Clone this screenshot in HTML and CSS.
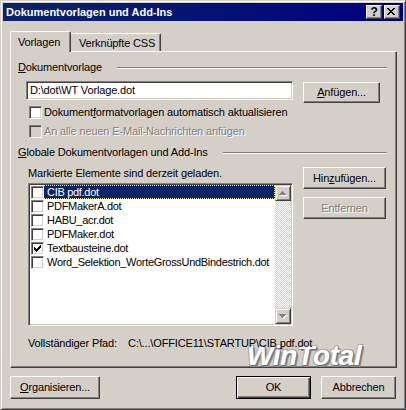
FILE: index.html
```html
<!DOCTYPE html>
<html lang="de">
<head>
<meta charset="utf-8">
<title>Dokumentvorlagen und Add-Ins</title>
<link rel="stylesheet" href="styles.css">
</head>
<body>
<div class="window">
  <div class="titlebar">
    <span class="title">Dokumentvorlagen und Add-Ins</span>
    <div class="tb-buttons">
      <span class="tb-btn help">?</span>
      <span class="tb-btn close">
        <svg width="14" height="12" viewBox="2 1 14 12" shape-rendering="crispEdges"><path fill="#000" d="M4 3h2v1h-2z M10 3h2v1h-2z M5 4h2v1h-2z M9 4h2v1h-2z M6 5h4v1h-4z M7 6h2v1h-2z M6 7h4v1h-4z M5 8h2v1h-2z M9 8h2v1h-2z M4 9h2v1h-2z M10 9h2v1h-2z"/></svg>
      </span>
    </div>
  </div>
  <div class="client">
    <div class="tabs">
      <div class="tab active">Vorlagen</div>
      <div class="tab inactive">Verknüpfte CSS</div>
    </div>
    <div class="panel">
      <div class="group-head g1"><span class="gh-label"><u>D</u>okumentvorlage</span><i class="etch"></i></div>
      <div class="tpl-row">
        <div class="textfield">D:\dot\WT Vorlage.dot</div>
        <div class="btn btn-attach"><span><u>A</u>nfügen...</span></div>
      </div>
      <div class="check-row first"><span class="cb"></span><span>Dokument<u>f</u>ormatvorlagen automatisch aktualisieren</span></div>
      <div class="check-row second disabled"><span class="cb"></span><span>An alle neuen E-Mail-Nachrichten anfügen</span></div>
      <div class="group-head g2"><span class="gh-label"><u>G</u>lobale Dokumentvorlagen und Add-Ins</span><i class="etch"></i></div>
      <div class="addins">
        <div class="addins-left">
          <div class="hint">Markierte Elemente sind derzeit geladen.</div>
          <div class="listbox">
            <div class="items">
              <div class="item selected"><span class="cb"></span><span class="name">CIB pdf.dot</span></div>
              <div class="item"><span class="cb"></span><span class="name">PDFMakerA.dot</span></div>
              <div class="item"><span class="cb"></span><span class="name">HABU_acr.dot</span></div>
              <div class="item"><span class="cb"></span><span class="name">PDFMaker.dot</span></div>
              <div class="item"><span class="cb checked"><svg width="13" height="13" viewBox="0 0 13 13" shape-rendering="crispEdges"><path fill="#000" d="M9 3h1v1h-1z M8 4h2v1h-2z M3 5h1v1h-1z M7 5h3v1h-3z M3 6h2v1h-2z M6 6h3v1h-3z M3 7h5v1h-5z M4 8h3v1h-3z M5 9h1v1h-1z"/></svg></span><span class="name">Textbausteine.dot</span></div>
              <div class="item"><span class="cb"></span><span class="name">Word_Selektion_WorteGrossUndBindestrich.dot</span></div>
            </div>
            <div class="scrollbar">
              <div class="sb-btn"><svg width="16" height="16" viewBox="0 0 16 16" shape-rendering="crispEdges"><path fill="#fff" d="M8 7h1v1h-1z M7 8h3v1h-3z M6 9h5v1h-5z M5 10h7v1h-7z"/><path fill="#808080" d="M7 6h1v1h-1z M6 7h3v1h-3z M5 8h5v1h-5z M4 9h7v1h-7z"/></svg></div>
              <div class="sb-track"></div>
              <div class="sb-btn"><svg width="16" height="16" viewBox="0 0 16 16" shape-rendering="crispEdges"><path fill="#fff" d="M5 7h7v1h-7z M6 8h5v1h-5z M7 9h3v1h-3z M8 10h1v1h-1z"/><path fill="#808080" d="M4 6h7v1h-7z M5 7h5v1h-5z M6 8h3v1h-3z M7 9h1v1h-1z"/></svg></div>
            </div>
          </div>
        </div>
        <div class="addins-right">
          <div class="btn btn-side"><span>Hin<u>z</u>ufügen...</span></div>
          <div class="btn btn-side disabled second"><span>Entfernen</span></div>
        </div>
      </div>
      <div class="path-row"><span>Vollständiger Pfad:</span><span class="path">C:\...\OFFICE11\STARTUP\CIB pdf.dot</span></div>
      <div class="watermark">WinTotal</div>
    </div>
    <div class="footer">
      <div class="btn btn-org"><span><u>O</u>rganisieren...</span></div>
      <span class="spacer"></span>
      <div class="btn btn-foot default"><span>OK</span></div>
      <div class="btn btn-foot cancel"><span>Abbrechen</span></div>
    </div>
  </div>
</div>
</body>
</html>
```

FILE: styles.css
```css
* { box-sizing: border-box; }
html, body { margin: 0; padding: 0; }
body {
  width: 406px;
  height: 410px;
  overflow: hidden;
  background: #d4d0c8;
  font: 11px/13px "Liberation Sans", Arial, sans-serif;
  letter-spacing: -0.15px;
  color: #000;
}
u { text-decoration: underline; text-underline-offset: 1px; }

.window {
  width: 406px;
  height: 410px;
  background: #d4d0c8;
  border: 1px solid;
  border-color: #d4d0c8 #404040 #404040 #d4d0c8;
  box-shadow: inset 1px 1px #fff, inset -1px -1px #808080;
  padding: 2px;
  display: flex;
  flex-direction: column;
}

/* title bar */
.titlebar {
  height: 18px;
  flex: none;
  background: linear-gradient(to right, #0a246a, #000080);
  color: #fff;
  display: flex;
  align-items: center;
  padding: 0 3px 0 3px;
}
.title { font-weight: bold; flex: 1; letter-spacing: 0; }
.tb-buttons { display: flex; gap: 2px; }
.tb-btn {
  width: 16px;
  height: 14px;
  background: #d4d0c8;
  border: 1px solid;
  border-color: #fff #404040 #404040 #fff;
  box-shadow: inset -1px -1px #808080;
  display: flex;
  align-items: center;
  justify-content: center;
  color: #000;
}
.tb-btn.help { font-weight: bold; font-size: 12px; line-height: 12px; }
.tb-btn svg { display: block; }

/* client */
.client { flex: 1; display: flex; flex-direction: column; }
.tabs {
  margin: 10px 0 0 7px;
  height: 20px;
  display: flex;
  align-items: flex-end;
}
.tab {
  background: #d4d0c8;
  border-top: 1px solid #fff;
  border-right: 1px solid #404040;
  box-shadow: inset -1px 0 #808080;
  border-top-left-radius: 2px;
  border-top-right-radius: 2px;
}
.tab.active {
  position: relative;
  z-index: 2;
  width: 61px;
  height: 21px;
  margin-bottom: -1px;
  border-left: 1px solid #fff;
  padding: 4px 0 0 7px;
}
.tab.inactive {
  width: 90px;
  height: 18px;
  padding: 3px 0 0 8px;
  border-top-left-radius: 0;
}

.panel {
  position: relative;
  margin-left: 7px;
  width: 387px;
  height: 317px;
  background: #d4d0c8;
  border: 1px solid;
  border-color: #fff #404040 #404040 #fff;
  box-shadow: inset -1px -1px #808080;
  display: flex;
  flex-direction: column;
}

.group-head {
  height: 13px;
  display: flex;
  align-items: center;
  margin: 0 9px 0 7px;
}
.group-head.g1 { margin-top: 9px; }
.group-head.g2 { margin-top: 8px; }
.etch {
  flex: 1;
  height: 2px;
  margin-left: 15px;
  border-top: 1px solid #808080;
  border-bottom: 1px solid #fff;
}

.tpl-row {
  display: flex;
  height: 22px;
  margin: 7px 0 0 15px;
}
.textfield {
  width: 267px;
  height: 19px;
  background: #fff;
  border: 1px solid;
  border-color: #808080 #fff #fff #808080;
  box-shadow: inset 1px 1px #404040, inset -1px -1px #d4d0c8;
  padding: 2px 0 0 3px;
  white-space: nowrap;
}

.btn {
  display: flex;
  align-items: center;
  justify-content: center;
  background: #d4d0c8;
  border: 1px solid;
  border-color: #fff #404040 #404040 #fff;
  box-shadow: inset -1px -1px #808080;
  white-space: nowrap;
}
.btn.default {
  border-color: #000;
  box-shadow: inset 1px 1px #fff, inset -1px -1px #404040, inset -2px -2px #808080;
}
.btn.disabled, .disabled > span:last-child {
  color: #808080;
  text-shadow: 1px 1px #fff;
}
.btn-attach { width: 77px; height: 21px; margin: 1px 0 0 10px; }

.cb {
  flex: none;
  width: 13px;
  height: 13px;
  background: #fff;
  border: 1px solid;
  border-color: #808080 #fff #fff #808080;
  box-shadow: inset 1px 1px #404040, inset -1px -1px #d4d0c8;
  position: relative;
}
.cb svg { display: block; margin: -1px 0 0 -1px; }
.disabled .cb { background: #d4d0c8; }

.check-row {
  display: flex;
  align-items: center;
  gap: 2px;
  height: 13px;
  margin-left: 18px;
  white-space: nowrap;
}
.check-row.first { margin-top: 3px; }
.check-row.second { margin-top: 6px; }

.addins {
  display: flex;
  margin: 8px 0 0 17px;
}
.addins-left { width: 265px; display: flex; flex-direction: column; }
.hint { height: 13px; white-space: nowrap; }
.listbox {
  margin-top: 3px;
  height: 143px;
  background: #fff;
  border: 1px solid;
  border-color: #808080 #fff #fff #808080;
  box-shadow: inset 1px 1px #404040, inset -1px -1px #d4d0c8;
  padding: 1px;
  display: flex;
}
.items { flex: 1; min-width: 0; overflow: hidden; }
.item {
  height: 14px;
  display: flex;
  align-items: center;
  white-space: nowrap;
}
.item .cb { margin-left: 1px; }
.item .name { flex: 1; height: 14px; padding-left: 3px; line-height: 14px; letter-spacing: -0.3px; }
.item.selected .name {
  background: #0a246a;
  color: #fff;
  border: 1px dotted #e8e890;
  border-left: 0;
  line-height: 12px;
}

.scrollbar {
  width: 16px;
  flex: none;
  display: flex;
  flex-direction: column;
}
.sb-btn {
  width: 16px;
  height: 16px;
  background: #d4d0c8;
  border: 1px solid;
  border-color: #d4d0c8 #404040 #404040 #d4d0c8;
  box-shadow: inset 1px 1px #fff, inset -1px -1px #808080;
  position: relative;
}
.sb-btn svg { display: block; margin: -1px 0 0 -1px; }
.sb-track {
  flex: 1;
  background-color: #fff;
  background-image: conic-gradient(#d4d0c8 25%, #fff 0 50%, #d4d0c8 0 75%, #fff 0);
  background-size: 2px 2px;
}

.addins-right { margin-left: 10px; display: flex; flex-direction: column; }
.btn-side { width: 83px; height: 22px; }
.btn-side.second { margin-top: 8px; }

.path-row {
  position: relative;
  z-index: 1;
  display: grid;
  grid-template-columns: 100px auto;
  margin: 11px 0 0 17px;
  height: 13px;
  white-space: nowrap;
}

.watermark {
  position: absolute;
  left: 236px;
  top: 291px;
  font: italic bold 28px/26px "Liberation Sans", Arial, sans-serif;
  color: #fff;
  letter-spacing: -0.3px;
  text-shadow: -1px -1px 0 #b0b0b0, 1px 1px 0 #707070, 2px 2px 0 #909090, 1px -1px 0 #a0a0a0, -1px 1px 0 #a0a0a0;
}

.footer {
  display: flex;
  margin: 8px 7px 0 7px;
  height: 23px;
}
.spacer { flex: 1; }
.btn-org { width: 90px; height: 23px; }
.btn-foot { width: 75px; height: 23px; }
.btn-foot.cancel { margin-left: 10px; }
```
